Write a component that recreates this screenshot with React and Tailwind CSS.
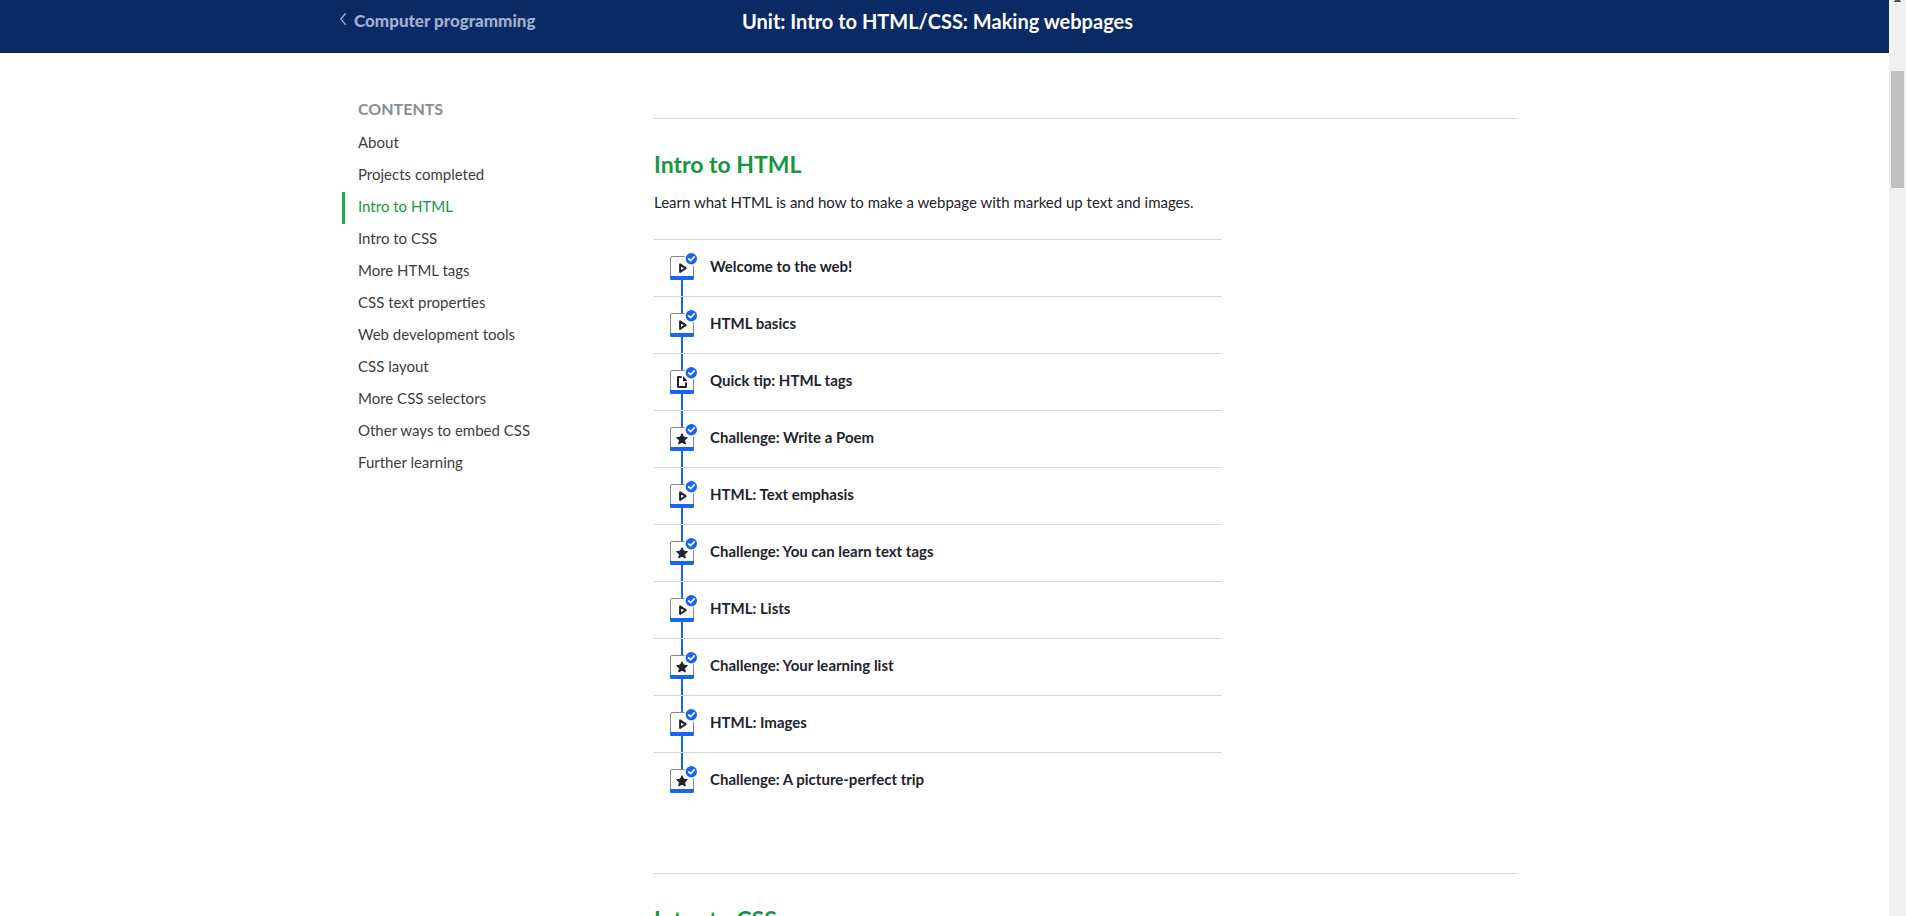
const contents = [
  'About',
  'Projects completed',
  'Intro to HTML',
  'Intro to CSS',
  'More HTML tags',
  'CSS text properties',
  'Web development tools',
  'CSS layout',
  'More CSS selectors',
  'Other ways to embed CSS',
  'Further learning',
];

const lessons = [
  { kind: 'video', title: 'Welcome to the web!' },
  { kind: 'video', title: 'HTML basics' },
  { kind: 'article', title: 'Quick tip: HTML tags' },
  { kind: 'challenge', title: 'Challenge: Write a Poem' },
  { kind: 'video', title: 'HTML: Text emphasis' },
  { kind: 'challenge', title: 'Challenge: You can learn text tags' },
  { kind: 'video', title: 'HTML: Lists' },
  { kind: 'challenge', title: 'Challenge: Your learning list' },
  { kind: 'video', title: 'HTML: Images' },
  { kind: 'challenge', title: 'Challenge: A picture-perfect trip' },
];

function Glyph({ kind }) {
  if (kind === 'video') {
    return <path d="M10.1 8.4v7.6l5.6-3.8z" fill="none" stroke="#21242c" strokeWidth="2" strokeLinejoin="round" />;
  }
  if (kind === 'article') {
    return (
      <g>
        <path d="M11.6 7H8v10h8v-4.5" fill="none" stroke="#21242c" strokeWidth="2" strokeLinejoin="round" />
        <path d="M13 6l4 4.4V11h-4z" fill="#21242c" />
      </g>
    );
  }
  return (
    <path
      d="M12 6.7l1.6 3.4 3.8.5-2.8 2.6.7 3.8L12 15.2 8.7 17l.7-3.8-2.8-2.6 3.8-.5z"
      fill="#21242c"
      stroke="#21242c"
      strokeLinejoin="round"
    />
  );
}

function LessonIcon({ kind }) {
  return (
    <svg width="24" height="24" viewBox="0 0 24 24" className="block overflow-visible" aria-hidden="true">
      <rect x="0.5" y="0.5" width="23" height="23" rx="1.5" fill="#fff" stroke="#85878c" />
      <path d="M0 20h24v2.5a1.5 1.5 0 0 1-1.5 1.5h-21A1.5 1.5 0 0 1 0 22.5z" fill="#1865f2" />
      <Glyph kind={kind} />
      <circle cx="21.3" cy="2.7" r="7" fill="#fff" />
      <circle cx="21.3" cy="2.7" r="5.7" fill="#1865f2" />
      <path d="M18.7 2.9l1.9 1.9 3.6-3.9" fill="none" stroke="#fff" strokeWidth="1.6" strokeLinecap="round" strokeLinejoin="round" />
    </svg>
  );
}

function Lesson({ kind, title, first, last }) {
  return (
    <li className="flex items-center border-t border-[#d6d8da] pl-4">
      <div className="flex flex-col items-center">
        <span className={first ? 'h-4 w-0.5' : 'h-4 w-0.5 bg-[#1865f2]'} />
        <LessonIcon kind={kind} />
        <span className={last ? 'h-4 w-0.5' : 'h-4 w-0.5 bg-[#1865f2]'} />
      </div>
      <a href="#lesson" className="pb-1 pl-4 text-[15px] leading-5 font-bold text-[#21242c]">
        {title}
      </a>
    </li>
  );
}

export default function App() {
  return (
    <div className="flex h-screen overflow-hidden bg-white font-['Lato',sans-serif]">
      <div className="min-w-0 flex-1 overflow-hidden">
        <header className="h-[53px] bg-[#0a2a66]">
          <div className="mx-auto grid max-w-[1209px] grid-cols-[312px_1fr_312px] pt-[9px]">
            <a href="#course" className="flex h-6 items-center gap-2 text-[17px] font-black text-[#a1b0cc]">
              <svg width="6" height="12" viewBox="0 0 6 12" className="mb-1" aria-hidden="true">
                <path d="M5.3 0.8L0.8 6l4.5 5.2" fill="none" stroke="currentColor" strokeWidth="1.3" strokeLinecap="round" />
              </svg>
              Computer programming
            </a>
            <h1 className="pr-3.5 text-center text-xl leading-6 font-bold whitespace-nowrap text-white">
              Unit: Intro to HTML/CSS: Making webpages
            </h1>
          </div>
        </header>

        <div className="mx-auto flex max-w-[1205px] pr-[29px]">
          <nav aria-label="Contents" className="w-[312px] shrink-0 pt-[46px]">
            <h2 className="pb-[9px] pl-4 text-base leading-5 font-bold text-[#888d93]">CONTENTS</h2>
            <ul>
              {contents.map((item) => (
                <li key={item}>
                  <a
                    href="#section"
                    className={
                      item === 'Intro to HTML'
                        ? 'flex h-8 items-center border-l-3 border-[#1fab54] pb-1 pl-[13px] text-[15px] leading-5 text-[#14973f]'
                        : 'flex h-8 items-center border-l-3 border-transparent pb-1 pl-[13px] text-[15px] leading-5 text-[#3b3e40]'
                    }
                  >
                    {item}
                  </a>
                </li>
              ))}
            </ul>
          </nav>

          <main className="min-w-0 flex-1 pt-[65px]">
            <section className="border-t border-[#d6d8da] pt-[31px] pb-16">
              <h2 className="text-[23px] leading-7 font-bold text-[#14973f]">Intro to HTML</h2>
              <p className="pt-3 pb-[25px] text-[15px] leading-6 text-[#21242c]">
                Learn what HTML is and how to make a webpage with marked up text and images.
              </p>
              <ol className="max-w-[568px]">
                {lessons.map((lesson, i) => (
                  <Lesson key={lesson.title} {...lesson} first={i === 0} last={i === lessons.length - 1} />
                ))}
              </ol>
            </section>
            <section className="border-t border-[#d6d8da] pt-[31px]">
              <h2 className="text-[23px] leading-7 font-bold text-[#14973f]">Intro to CSS</h2>
            </section>
          </main>
        </div>
      </div>

      <div className="flex w-[17px] shrink-0 flex-col items-center bg-[#f1f1f1]" aria-hidden="true">
        <svg width="7" height="2" viewBox="0 0 7 2" className="mb-[69px] block">
          <path d="M1 0h5v1h1v1H0V1h1z" fill="#505050" />
        </svg>
        <div className="h-[117px] w-[13px] bg-[#c1c1c1]" />
      </div>
    </div>
  );
}
